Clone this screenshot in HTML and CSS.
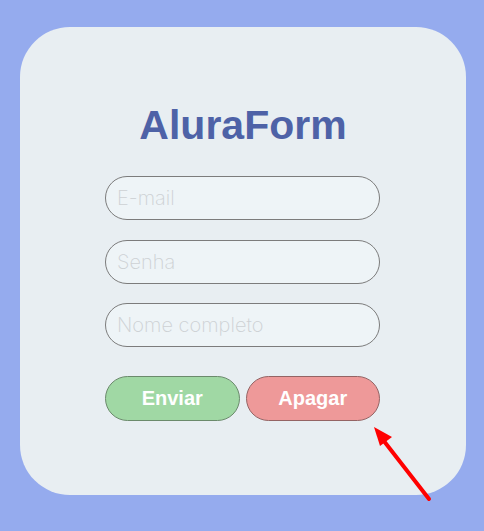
FILE: index.html
```html
<!DOCTYPE html>
<html lang="pt">
<head>
<meta charset="utf-8">
<title>AluraForm</title>
<link rel="stylesheet" href="styles.css">
</head>
<body>
<main class="card">
  <h1 class="title">AluraForm</h1>
  <form class="form">
    <input class="field" type="email" placeholder="E-mail">
    <input class="field" type="password" placeholder="Senha">
    <input class="field" type="text" placeholder="Nome completo">
    <div class="actions">
      <button class="btn btn-send" type="button">Enviar</button>
      <button class="btn btn-clear" type="button">Apagar</button>
    </div>
  </form>
</main>
<svg class="arrow" width="484" height="531" viewBox="0 0 484 531">
  <line x1="429" y1="499" x2="380" y2="436" stroke="#ff0000" stroke-width="4" stroke-linecap="round"/>
  <polygon points="374,427 380,446 392,437" fill="#ff0000"/>
</svg>
</body>
</html>
```
FILE: styles.css
```css
* { box-sizing: border-box; }
html, body { margin: 0; padding: 0; }
body {
  background: #95abee;
  width: 484px;
  height: 531px;
  overflow: hidden;
  position: relative;
  padding: 27px 18px 0 20px;
}
.card {
  width: 446px;
  height: 468px;
  background: #e8eef2;
  border-radius: 50px;
  padding-top: 75px;
  display: flex;
  flex-direction: column;
  align-items: center;
}
.title {
  margin: 0 0 28px 0;
  font-family: "Liberation Sans", Arial, sans-serif;
  font-weight: bold;
  font-size: 41px;
  line-height: 46px;
  color: #4e62a7;
}
.form {
  width: 275px;
  display: flex;
  flex-direction: column;
  margin-right: 1px;
}
.field {
  width: 275px;
  height: 44px;
  border: 1px solid #7c7c7c;
  border-radius: 22px;
  background: #eef4f7;
  padding: 0 11px;
  font-family: Inter, sans-serif;
  font-weight: 200;
  font-size: 20px;
  color: #333;
  margin: 0 0 20px 0;
  outline: none;
}
.field:nth-of-type(2) { margin-bottom: 19px; }
.field:nth-of-type(3) { margin-bottom: 29px; }
.field::placeholder { color: #cdd1d4; }
.actions {
  display: flex;
  gap: 6px;
}
.btn {
  flex: 1;
  height: 45px;
  border-radius: 23px;
  font-family: "Liberation Sans", Arial, sans-serif;
  font-weight: bold;
  font-size: 20px;
  color: #ffffff;
  padding: 0;
  cursor: pointer;
}
.btn-send {
  background: #a0d8a4;
  border: 1px solid #6b8a6c;
}
.btn-clear {
  background: #ee9999;
  border: 1px solid #946464;
}
.arrow {
  position: absolute;
  left: 0;
  top: 0;
  pointer-events: none;
}
```
